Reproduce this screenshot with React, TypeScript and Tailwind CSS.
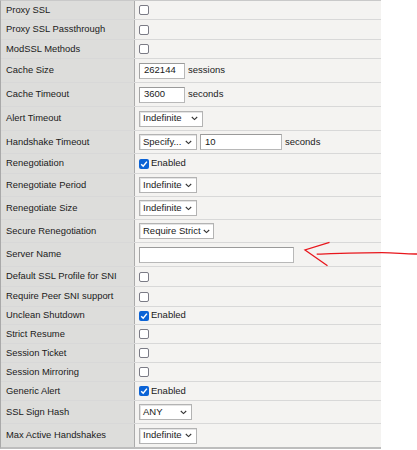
import type { ReactNode } from "react";

type Row = {
  label: string;
  h: string;
  value: ReactNode;
};

function Box({ checked }: { checked?: boolean }) {
  if (checked) {
    return (
      <span className="flex h-[10px] w-[10px] items-center justify-center rounded-[2px] bg-[#0b63d6]">
        <svg width="8" height="8" viewBox="0 0 8 8">
          <path d="M1.2 4.2 L3.2 6.2 L6.9 1.6" fill="none" stroke="#fff" strokeWidth="1.5" />
        </svg>
      </span>
    );
  }
  return (
    <span className="block h-[10px] w-[10px] rounded-[2px] border border-[#7b7b85] bg-white" />
  );
}

function Enabled() {
  return (
    <div className="flex items-center gap-[2px]">
      <Box checked />
      <span>Enabled</span>
    </div>
  );
}

function Chevron() {
  return (
    <svg width="7" height="5" viewBox="0 0 7 5" className="shrink-0">
      <path d="M0.8 1 L3.5 3.6 L6.2 1" fill="none" stroke="#333" strokeWidth="1.1" />
    </svg>
  );
}

function Select({ text, w }: { text: string; w: string }) {
  return (
    <div
      className={`flex h-[16px] ${w} items-center justify-between gap-[2px] whitespace-nowrap border border-[#b3b3b3] bg-white pl-[3px] pr-[4px] shadow-[inset_1px_1px_0_#e4e4e4]`}
    >
      <span>{text}</span>
      <Chevron />
    </div>
  );
}

function TextBox({ text, w }: { text?: string; w: string }) {
  return (
    <div
      className={`flex h-[16px] ${w} items-center border border-[#b8b8b8] border-t-[#9a9a9a] border-l-[#a4a4a4] bg-white pl-[4px]`}
    >
      {text}
    </div>
  );
}

const rows: Row[] = [
  { label: "Proxy SSL", h: "h-[19px]", value: <Box /> },
  { label: "Proxy SSL Passthrough", h: "h-[20px]", value: <Box /> },
  { label: "ModSSL Methods", h: "h-[19px]", value: <Box /> },
  {
    label: "Cache Size",
    h: "h-[24px]",
    value: (
      <div className="flex items-center gap-[3px]">
        <TextBox text="262144" w="w-[46px]" />
        <span>sessions</span>
      </div>
    ),
  },
  {
    label: "Cache Timeout",
    h: "h-[24px]",
    value: (
      <div className="flex items-center gap-[3px]">
        <TextBox text="3600" w="w-[46px]" />
        <span>seconds</span>
      </div>
    ),
  },
  { label: "Alert Timeout", h: "h-[24px]", value: <Select text="Indefinite" w="w-[64px]" /> },
  {
    label: "Handshake Timeout",
    h: "h-[23px]",
    value: (
      <div className="flex items-center">
        <Select text="Specify..." w="w-[58px]" />
        <div className="ml-[3px]">
          <TextBox text="10" w="w-[82px]" />
        </div>
        <span className="ml-[3px]">seconds</span>
      </div>
    ),
  },
  { label: "Renegotiation", h: "h-[20px]", value: <Enabled /> },
  { label: "Renegotiate Period", h: "h-[23px]", value: <Select text="Indefinite" w="w-[58px]" /> },
  { label: "Renegotiate Size", h: "h-[23px]", value: <Select text="Indefinite" w="w-[58px]" /> },
  { label: "Secure Renegotiation", h: "h-[23px]", value: <Select text="Require Strict" w="w-[75px]" /> },
  { label: "Server Name", h: "h-[24px]", value: <TextBox w="w-[155px]" /> },
  { label: "Default SSL Profile for SNI", h: "h-[20px]", value: <Box /> },
  { label: "Require Peer SNI support", h: "h-[20px]", value: <Box /> },
  { label: "Unclean Shutdown", h: "h-[18px]", value: <Enabled /> },
  { label: "Strict Resume", h: "h-[19px]", value: <Box /> },
  { label: "Session Ticket", h: "h-[19px]", value: <Box /> },
  { label: "Session Mirroring", h: "h-[19px]", value: <Box /> },
  { label: "Generic Alert", h: "h-[19px]", value: <Enabled /> },
  { label: "SSL Sign Hash", h: "h-[23px]", value: <Select text="ANY" w="w-[53px]" /> },
  { label: "Max Active Handshakes", h: "h-[23px]", value: <Select text="Indefinite" w="w-[58px]" /> },
];

export default function App() {
  return (
    <div className="relative h-[450px] w-[417px] overflow-hidden bg-white font-['Liberation_Sans',Arial,sans-serif] text-[9.5px] text-[#1a1a1a]">
      <div className="w-[381px] border-t border-b-2 border-l border-[#c9c9c9] border-l-[#a9a9a9] border-b-[#bdbdbd]">
        {rows.map((row) => (
          <div key={row.label} className={`flex ${row.h} border-b border-[#d8d8d8] last:border-b-0`}>
            <div className="flex w-[134px] shrink-0 items-center border-r border-[#ababab] bg-[#dddddb] pl-[5px] text-[9.4px]">
              {row.label}
            </div>
            <div className="flex flex-1 items-center bg-[#f4f3f1] pl-[4px]">{row.value}</div>
          </div>
        ))}
      </div>
      <svg
        className="absolute left-0 top-0"
        width="417"
        height="450"
        viewBox="0 0 417 450"
      >
        <path d="M329.5 242.3 L305 250 L327.5 265.7" fill="none" stroke="#e8161c" strokeWidth="1.3" />
        <path
          d="M316.7 254.2 C 340 253.4, 362 252.6, 382 252.6 C 396 252.6, 405 254.2, 417 254"
          fill="none"
          stroke="#e8161c"
          strokeWidth="1.3"
        />
      </svg>
    </div>
  );
}
